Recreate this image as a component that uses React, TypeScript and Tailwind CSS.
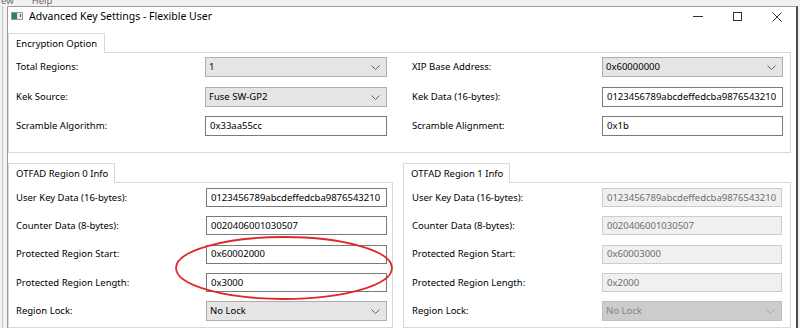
import React from "react";

function Chevron({ color = "#606060" }: { color?: string }) {
  return (
    <svg width="9" height="5" viewBox="0 0 9 5" className="shrink-0">
      <path d="M0.5 0.5 L4.5 4.5 L8.5 0.5" fill="none" stroke={color} strokeWidth="1" />
    </svg>
  );
}

function TextBox({ value, disabled, w, h = "h-[20px]" }: { value: string; disabled?: boolean; w: string; h?: string }) {
  return (
    <div
      className={`${w} ${h} flex items-center pl-[4px] border ${
        disabled ? "bg-[#f0f0f0] border-[#cccccc] text-[#6d6d6d]" : "bg-white border-[#7a7a7a] text-black"
      }`}
    >
      {value}
    </div>
  );
}

function Combo({ value, disabled, w, h = "h-[20px]" }: { value: string; disabled?: boolean; w: string; h?: string }) {
  return (
    <div
      className={`${w} ${h} flex items-center justify-between pl-[3px] pr-[6px] border ${
        disabled ? "bg-[#cccccc] border-[#bfbfbf] text-[#838383]" : "bg-[#e5e5e5] border-[#adadad] text-black"
      }`}
    >
      <span>{value}</span>
      <Chevron color={disabled ? "#a8a8a8" : "#606060"} />
    </div>
  );
}

function Row({ label, children, lw }: { label: string; children: React.ReactNode; lw: string }) {
  return (
    <div className="flex items-center">
      <div className={`${lw} shrink-0 text-black`}>{label}</div>
      {children}
    </div>
  );
}

function RegionGroup({
  title,
  tabW,
  disabled,
  start,
  length,
  w,
  pl,
  cw,
}: {
  title: string;
  tabW: string;
  disabled?: boolean;
  start: string;
  length: string;
  w: string;
  pl: string;
  cw: string;
}) {
  return (
    <div className={`${w} flex flex-col`}>
      <div className={`${tabW} h-[20px] -mb-px relative z-10 bg-white border border-b-0 border-[#d9d9d9] flex items-center pl-[7px] text-black`}>
        {title}
      </div>
      <div className={`h-[146px] border border-[#d9d9d9] bg-white ${pl} pt-[5px] flex flex-col gap-[9.25px]`}>
        <Row label="User Key Data (16-bytes):" lw="w-[190px]">
          <TextBox value="0123456789abcdeffedcba9876543210" disabled={disabled} w={cw} h="h-[19px]" />
        </Row>
        <Row label="Counter Data (8-bytes):" lw="w-[190px]">
          <TextBox value="0020406001030507" disabled={disabled} w={cw} h="h-[19px]" />
        </Row>
        <Row label="Protected Region Start:" lw="w-[190px]">
          <TextBox value={start} disabled={disabled} w={cw} h="h-[19px]" />
        </Row>
        <Row label="Protected Region Length:" lw="w-[190px]">
          <TextBox value={length} disabled={disabled} w={cw} h="h-[19px]" />
        </Row>
        <Row label="Region Lock:" lw="w-[190px]">
          <Combo value="No Lock" disabled={disabled} w={cw} h="h-[20px]" />
        </Row>
      </div>
    </div>
  );
}

export default function App() {
  return (
    <div className="relative w-[800px] h-[328px] overflow-hidden bg-[#f2f2f2] font-['Noto_Sans',sans-serif] text-[9.5px] leading-none">
      {/* window behind */}
      <div className="absolute left-[1px] top-[-4px] flex gap-[18px] text-[9.5px] text-[#6a6a6a]">
        <span>ew</span>
        <span>Help</span>
      </div>
      <div className="absolute left-[2px] top-[6px] w-px h-[322px] bg-[#c4c4c4]" />

      {/* dialog window */}
      <div className="absolute left-[7px] top-[6px] w-[791px] h-[340px] bg-white border border-[#9c9c9c] border-r-2 border-r-[#4d4d4d] flex flex-col">
        {/* title bar */}
        <div className="h-[26px] flex items-start shrink-0">
          <div className="ml-[3px] mt-[5px] w-[12px] h-[8px] border border-[#9a9a9a] bg-[#e8e8e8] flex">
            <div className="w-[5px] h-full bg-[#2e7d6b]" />
            <div className="ml-[3px] mt-[1px] w-[1px] h-[3px] bg-[#555]" />
          </div>
          <div className="ml-[6px] mt-[4px] text-[10.5px] text-black">Advanced Key Settings - Flexible User</div>
          <div className="ml-auto mr-[14px] mt-[5px] flex items-start gap-[30px]">
            <div className="w-[10px] h-[9px] flex items-center">
              <div className="w-[10px] h-px bg-[#333]" />
            </div>
            <div className="w-[9px] h-[9px] border border-[#333]" />
            <svg width="10" height="10" viewBox="0 0 10 10">
              <path d="M0.5 0.5 L9.5 9.5 M9.5 0.5 L0.5 9.5" stroke="#333" strokeWidth="1" />
            </svg>
          </div>
        </div>

        {/* Encryption option tab */}
        <div className="w-[97px] h-[20px] -mb-px relative z-10 bg-white border border-b-0 border-[#d9d9d9] flex items-center pl-[7px] text-black">
          Encryption Option
        </div>
        <div className="w-[783px] h-[101px] border border-[#d9d9d9] bg-white pl-[7px] pt-[4px] flex flex-col">
          <div className="flex items-center">
            <Row label="Total Regions:" lw="w-[189px]">
              <Combo value="1" w="w-[182px]" />
            </Row>
            <div className="ml-[25px]">
              <Row label="XIP Base Address:" lw="w-[190px]">
                <Combo value="0x60000000" w="w-[181px]" />
              </Row>
            </div>
          </div>
          <div className="flex items-center mt-[10px]">
            <Row label="Kek Source:" lw="w-[189px]">
              <Combo value="Fuse SW-GP2" w="w-[182px]" />
            </Row>
            <div className="ml-[25px]">
              <Row label="Kek Data (16-bytes):" lw="w-[190px]">
                <TextBox value="0123456789abcdeffedcba9876543210" w="w-[181px]" />
              </Row>
            </div>
          </div>
          <div className="flex items-center mt-[9px]">
            <Row label="Scramble Algorithm:" lw="w-[189px]">
              <TextBox value="0x33aa55cc" w="w-[182px]" />
            </Row>
            <div className="ml-[25px]">
              <Row label="Scramble Alignment:" lw="w-[190px]">
                <TextBox value="0x1b" w="w-[181px]" />
              </Row>
            </div>
          </div>
        </div>

        {/* region groups */}
        <div className="mt-[10px] flex gap-[10px]">
          <RegionGroup
            title="OTFAD Region 0 Info"
            tabW="w-[107px]"
            start="0x60002000"
            length="0x3000"
            w="w-[385px]"
            pl="pl-[7px]"
            cw="w-[181px]"
          />
          <RegionGroup
            title="OTFAD Region 1 Info"
            tabW="w-[107px]"
            disabled
            start="0x60003000"
            length="0x2000"
            w="w-[388px]"
            pl="pl-[8px]"
            cw="w-[180px]"
          />
        </div>
      </div>

      {/* red annotation */}
      <svg className="absolute left-0 top-0 pointer-events-none" width="800" height="328" viewBox="0 0 800 328">
        <ellipse cx="284" cy="268" rx="108" ry="31" fill="none" stroke="#e0262b" strokeWidth="1.8" />
      </svg>
    </div>
  );
}
